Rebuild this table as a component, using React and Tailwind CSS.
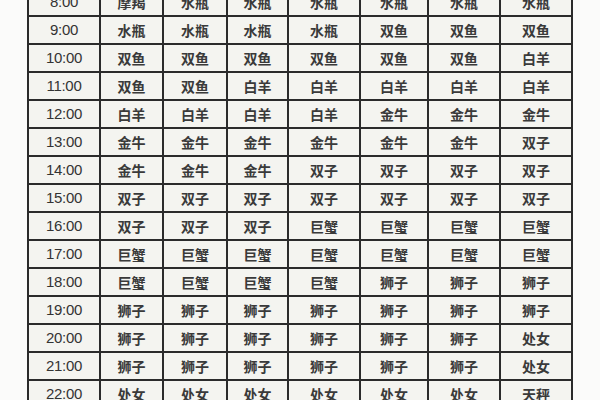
import React from "react";

const rows = [
  ["8:00", "摩羯", "水瓶", "水瓶", "水瓶", "水瓶", "水瓶", "水瓶"],
  ["9:00", "水瓶", "水瓶", "水瓶", "水瓶", "双鱼", "双鱼", "双鱼"],
  ["10:00", "双鱼", "双鱼", "双鱼", "双鱼", "双鱼", "双鱼", "白羊"],
  ["11:00", "双鱼", "双鱼", "白羊", "白羊", "白羊", "白羊", "白羊"],
  ["12:00", "白羊", "白羊", "白羊", "白羊", "金牛", "金牛", "金牛"],
  ["13:00", "金牛", "金牛", "金牛", "金牛", "金牛", "金牛", "双子"],
  ["14:00", "金牛", "金牛", "金牛", "双子", "双子", "双子", "双子"],
  ["15:00", "双子", "双子", "双子", "双子", "双子", "双子", "双子"],
  ["16:00", "双子", "双子", "双子", "巨蟹", "巨蟹", "巨蟹", "巨蟹"],
  ["17:00", "巨蟹", "巨蟹", "巨蟹", "巨蟹", "巨蟹", "巨蟹", "巨蟹"],
  ["18:00", "巨蟹", "巨蟹", "巨蟹", "巨蟹", "狮子", "狮子", "狮子"],
  ["19:00", "狮子", "狮子", "狮子", "狮子", "狮子", "狮子", "狮子"],
  ["20:00", "狮子", "狮子", "狮子", "狮子", "狮子", "狮子", "处女"],
  ["21:00", "狮子", "狮子", "狮子", "狮子", "狮子", "狮子", "处女"],
  ["22:00", "处女", "处女", "处女", "处女", "处女", "处女", "天秤"],
];

export default function App() {
  return (
    <div className="w-[600px] h-[400px] overflow-hidden bg-[#fbfbfa] pl-[27px]">
      <div className="mt-[-13px] w-[546px] p-[2px] bg-[#2b2b2b] grid grid-cols-[70px_61px_62px_59px_70px_66px_70px_70px] auto-rows-[26px] gap-[2px]">
        {rows.map((r, i) =>
          r.map((c, j) => (
            <div
              key={i + "-" + j}
              className={
                "bg-[#f4f4f0] flex items-center justify-center " +
                (j === 0
                  ? "text-[15px] text-[#333333] font-['Liberation_Sans',sans-serif] tracking-[-0.3px]"
                  : "text-[14px] text-[#3a3a3a] font-semibold font-['Noto_Sans_CJK_SC',sans-serif]")
              }
            >
              {c}
            </div>
          ))
        )}
      </div>
    </div>
  );
}
